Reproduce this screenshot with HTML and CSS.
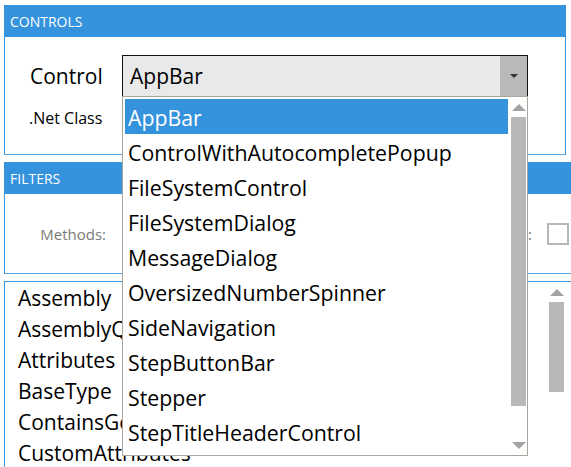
FILE: index.html
```html
<!DOCTYPE html>
<html>
<head>
<meta charset="utf-8">
<link rel="stylesheet" href="styles.css">
</head>
<body>
<div class="page">
  <section class="panel controls">
    <div class="panel-head">CONTROLS</div>
    <div class="controls-body">
      <div class="row">
        <span class="label-big">Control</span>
        <div class="combo">
          <span class="combo-text">AppBar</span>
          <span class="combo-btn"><span class="tri-down-dark"></span></span>
          <div class="popup">
            <ul class="popup-items">
              <li class="item selected">AppBar</li>
              <li class="item">ControlWithAutocompletePopup</li>
              <li class="item">FileSystemControl</li>
              <li class="item">FileSystemDialog</li>
              <li class="item">MessageDialog</li>
              <li class="item">OversizedNumberSpinner</li>
              <li class="item">SideNavigation</li>
              <li class="item">StepButtonBar</li>
              <li class="item">Stepper</li>
              <li class="item">StepTitleHeaderControl</li>
            </ul>
            <div class="vscroll popup-scroll">
              <span class="sb-btn"><span class="tri-up"></span></span>
              <span class="thumb popup-thumb"></span>
              <span class="sb-fill"></span>
              <span class="sb-btn"><span class="tri-down"></span></span>
            </div>
          </div>
        </div>
      </div>
      <div class="row net-row">
        <span class="label-small">.Net Class</span>
      </div>
    </div>
  </section>

  <section class="panel filters">
    <div class="panel-head">FILTERS</div>
    <div class="filters-body">
      <span class="methods">Methods:</span>
      <span class="filler"></span>
      <span class="hidden-label">Inherited:</span>
      <span class="checkbox"></span>
    </div>
  </section>

  <section class="panel list-panel">
    <ul class="members">
      <li>Assembly</li>
      <li>AssemblyQualifiedName</li>
      <li>Attributes</li>
      <li>BaseType</li>
      <li>ContainsGenericParameters</li>
      <li>CustomAttributes</li>
      <li>DeclaredConstructors</li>
    </ul>
    <div class="vscroll list-scroll">
      <span class="sb-btn"><span class="tri-up"></span></span>
      <span class="thumb list-thumb"></span>
    </div>
  </section>
</div>
</body>
</html>
```

FILE: styles.css
```css
* { box-sizing: border-box; }
html, body { margin: 0; padding: 0; background: #fff; overflow: hidden; }
body {
  width: 571px;
  height: 467px;
  font-family: "Open Sans", "Noto Sans", sans-serif;
  color: #000;
}
ul { list-style: none; margin: 0; padding: 0; }

.page {
  display: flex;
  flex-direction: column;
  gap: 7px;
  padding: 5px 0 0 4px;
}

.panel {
  border: 1px solid #3a94dd;
  border-bottom-color: #5aa6e4;
  background: #fff;
  flex: none;
}
.panel-head {
  background: #3592dc;
  color: #fff;
  font-size: 14px;
  padding-left: 6px;
  margin: -1px -1px 0 -1px;
  padding-top: 2px;
  height: 32px;
  line-height: 30px;
}

.controls { width: 562px; height: 150px; }
.controls-body { padding: 18px 0 0 25px; }
.row { display: flex; align-items: center; }
.label-big { width: 92px; font-size: 21px; }
.net-row { margin-top: 10px; margin-left: -1px; }
.label-small { font-size: 16px; }

.combo {
  position: relative;
  width: 406px;
  height: 42px;
  border: 1px solid #111;
  background: #e9e9e9;
  display: flex;
  align-items: center;
}
.combo-text { flex: 1; padding-left: 7px; font-size: 21px; }
.combo-btn {
  width: 27px;
  align-self: stretch;
  background: #b9b9b9;
  display: flex;
  align-items: center;
  justify-content: center;
}
.tri-down-dark {
  width: 0; height: 0;
  border-left: 4px solid transparent;
  border-right: 4px solid transparent;
  border-top: 4px solid #333;
}

.popup {
  position: absolute;
  left: -1px;
  top: 100%;
  width: 406px;
  height: 360px;
  border: 1px solid #aba69c;
  background: #fff;
  display: flex;
  padding: 2px 0 0 2px;
  z-index: 5;
}
.popup-items { width: 383px; margin-right: 3px; }
.item {
  height: 35px;
  line-height: 35px;
  padding: 1px 0 0 3px;
  font-size: 21.3px;
  white-space: nowrap;
}
.item.selected { background: #3592dc; color: #fff; }

.vscroll {
  width: 15px;
  display: flex;
  flex-direction: column;
}
.popup-scroll { margin-top: -2px; height: 358px; }
.sb-btn {
  height: 20px;
  flex: none;
  display: flex;
  align-items: center;
  justify-content: center;
}
.tri-up {
  width: 0; height: 0;
  border-left: 7px solid transparent;
  border-right: 7px solid transparent;
  border-bottom: 7px solid #a3a3a3;
}
.tri-down {
  width: 0; height: 0;
  border-left: 7px solid transparent;
  border-right: 7px solid transparent;
  border-top: 7px solid #a3a3a3;
}
.thumb { background: #b8b8b8; flex: none; }
.popup-thumb { height: 289px; }
.sb-fill { flex: 1; }

.filters { width: 580px; height: 112px; border-right: none; }
.filters-body {
  height: 79px;
  display: flex;
  align-items: center;
}
.methods {
  width: 101px;
  text-align: right;
  font-size: 15px;
  color: #7a7a7a;
}
.filler { flex: 1; }
.hidden-label { font-size: 15px; color: #7a7a7a; margin-right: 15px; }
.checkbox {
  width: 22px;
  height: 22px;
  border: 2px solid #b7b7b7;
  background: #fff;
  margin-right: 15px;
  margin-top: 1px;
}

.list-panel {
  width: 580px;
  height: 200px;
  border-right: none;
  border-bottom: none;
  display: flex;
  overflow: hidden;
}
.members { flex: 1; padding: 1px 0 0 13px; }
.members li {
  height: 31px;
  line-height: 31px;
  font-size: 21px;
  white-space: nowrap;
}
.list-scroll { margin-right: 20px; }
.list-thumb { height: 90px; }
```
